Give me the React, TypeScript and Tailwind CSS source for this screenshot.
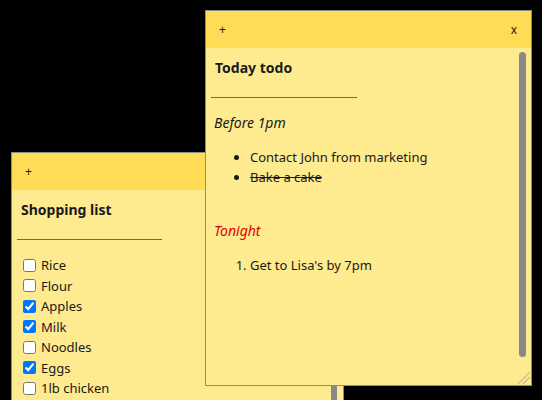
import React from 'react';

const font = { fontFamily: '"Noto Sans", "Open Sans", sans-serif' };

const ResizeGrip: React.FC = () => (
  <svg width="16" height="16" viewBox="0 0 16 16" className="block">
    <line x1="15" y1="3" x2="3" y2="15" stroke="#cdbf8a" strokeWidth="1.3" />
    <line x1="15" y1="8" x2="8" y2="15" stroke="#cdbf8a" strokeWidth="1.3" />
  </svg>
);

const groceries: { label: string; done: boolean }[] = [
  { label: 'Rice', done: false },
  { label: 'Flour', done: false },
  { label: 'Apples', done: true },
  { label: 'Milk', done: true },
  { label: 'Noodles', done: false },
  { label: 'Eggs', done: true },
  { label: '1lb chicken', done: false },
];

export default function App() {
  return (
    <div className="relative w-[542px] h-[400px] bg-black overflow-hidden text-[14px] text-[#1a1a1a]" style={font}>
      {/* back note */}
      <div className="absolute left-[11px] top-[152px] w-[333px] h-[320px] flex flex-col border border-[#8c8c8c] bg-[#feea8f]">
        <div className="h-[37px] bg-[#fedc56] flex items-center px-[13px] text-[12px]">
          <span>+</span>
        </div>
        <div className="flex-1 flex min-h-0 pr-[6px]">
          <div className="flex-1 px-[5px] pt-[10px]">
            <h2 className="ml-[4px] font-bold leading-[20px]">Shopping list</h2>
            <hr className="mt-[19px] w-[145px] border-0 h-px bg-[#6e6a5c]" />
            <div className="mt-[15px] flex flex-col text-[13px]">
              {groceries.map((g) => (
                <label key={g.label} className="h-[20.5px] flex items-center">
                  <input type="checkbox" defaultChecked={g.done} className="m-0 ml-[6px] w-[13px] h-[13px]" />
                  <span className="ml-[5px] leading-[20px]">{g.label}</span>
                </label>
              ))}
            </div>
          </div>
          <div className="w-[6px] mt-[4px] mb-[30px] rounded-full bg-[#888]" />
        </div>
      </div>

      {/* front note */}
      <div className="absolute left-[205px] top-[10px] w-[327px] h-[376px] flex flex-col border border-[#8c8c8c] bg-[#feea8f]">
        <div className="h-[37px] bg-[#fedc56] flex items-center justify-between pl-[13px] pr-[14px] text-[12px]">
          <span>+</span>
          <span>x</span>
        </div>
        <div className="flex-1 flex min-h-0 pr-[5px]">
          <div className="flex-1 px-[5px] pt-[10px]">
            <h2 className="ml-[4px] font-bold leading-[20px]">Today todo</h2>
            <hr className="mt-[19px] w-[146px] border-0 h-px bg-[#6e6a5c]" />
            <p className="mt-[15px] ml-[3px] italic leading-[20px]">Before 1pm</p>
            <ul className="mt-[14px] pl-[39px] list-disc leading-[20px] text-[13px]">
              <li>Contact John from marketing</li>
              <li className="line-through">Bake a cake</li>
            </ul>
            <p className="mt-[34px] ml-[3px] italic leading-[20px] text-[#e00000]">Tonight</p>
            <ol className="mt-[14px] pl-[39px] list-decimal leading-[20px] text-[13px]">
              <li>Get to Lisa's by 7pm</li>
            </ol>
          </div>
          <div className="flex flex-col items-end">
            <div className="w-[7px] mt-[4px] h-[305px] rounded-full bg-[#888]" />
            <div className="mt-auto -mr-[5px]">
              <ResizeGrip />
            </div>
          </div>
        </div>
      </div>
    </div>
  );
}
